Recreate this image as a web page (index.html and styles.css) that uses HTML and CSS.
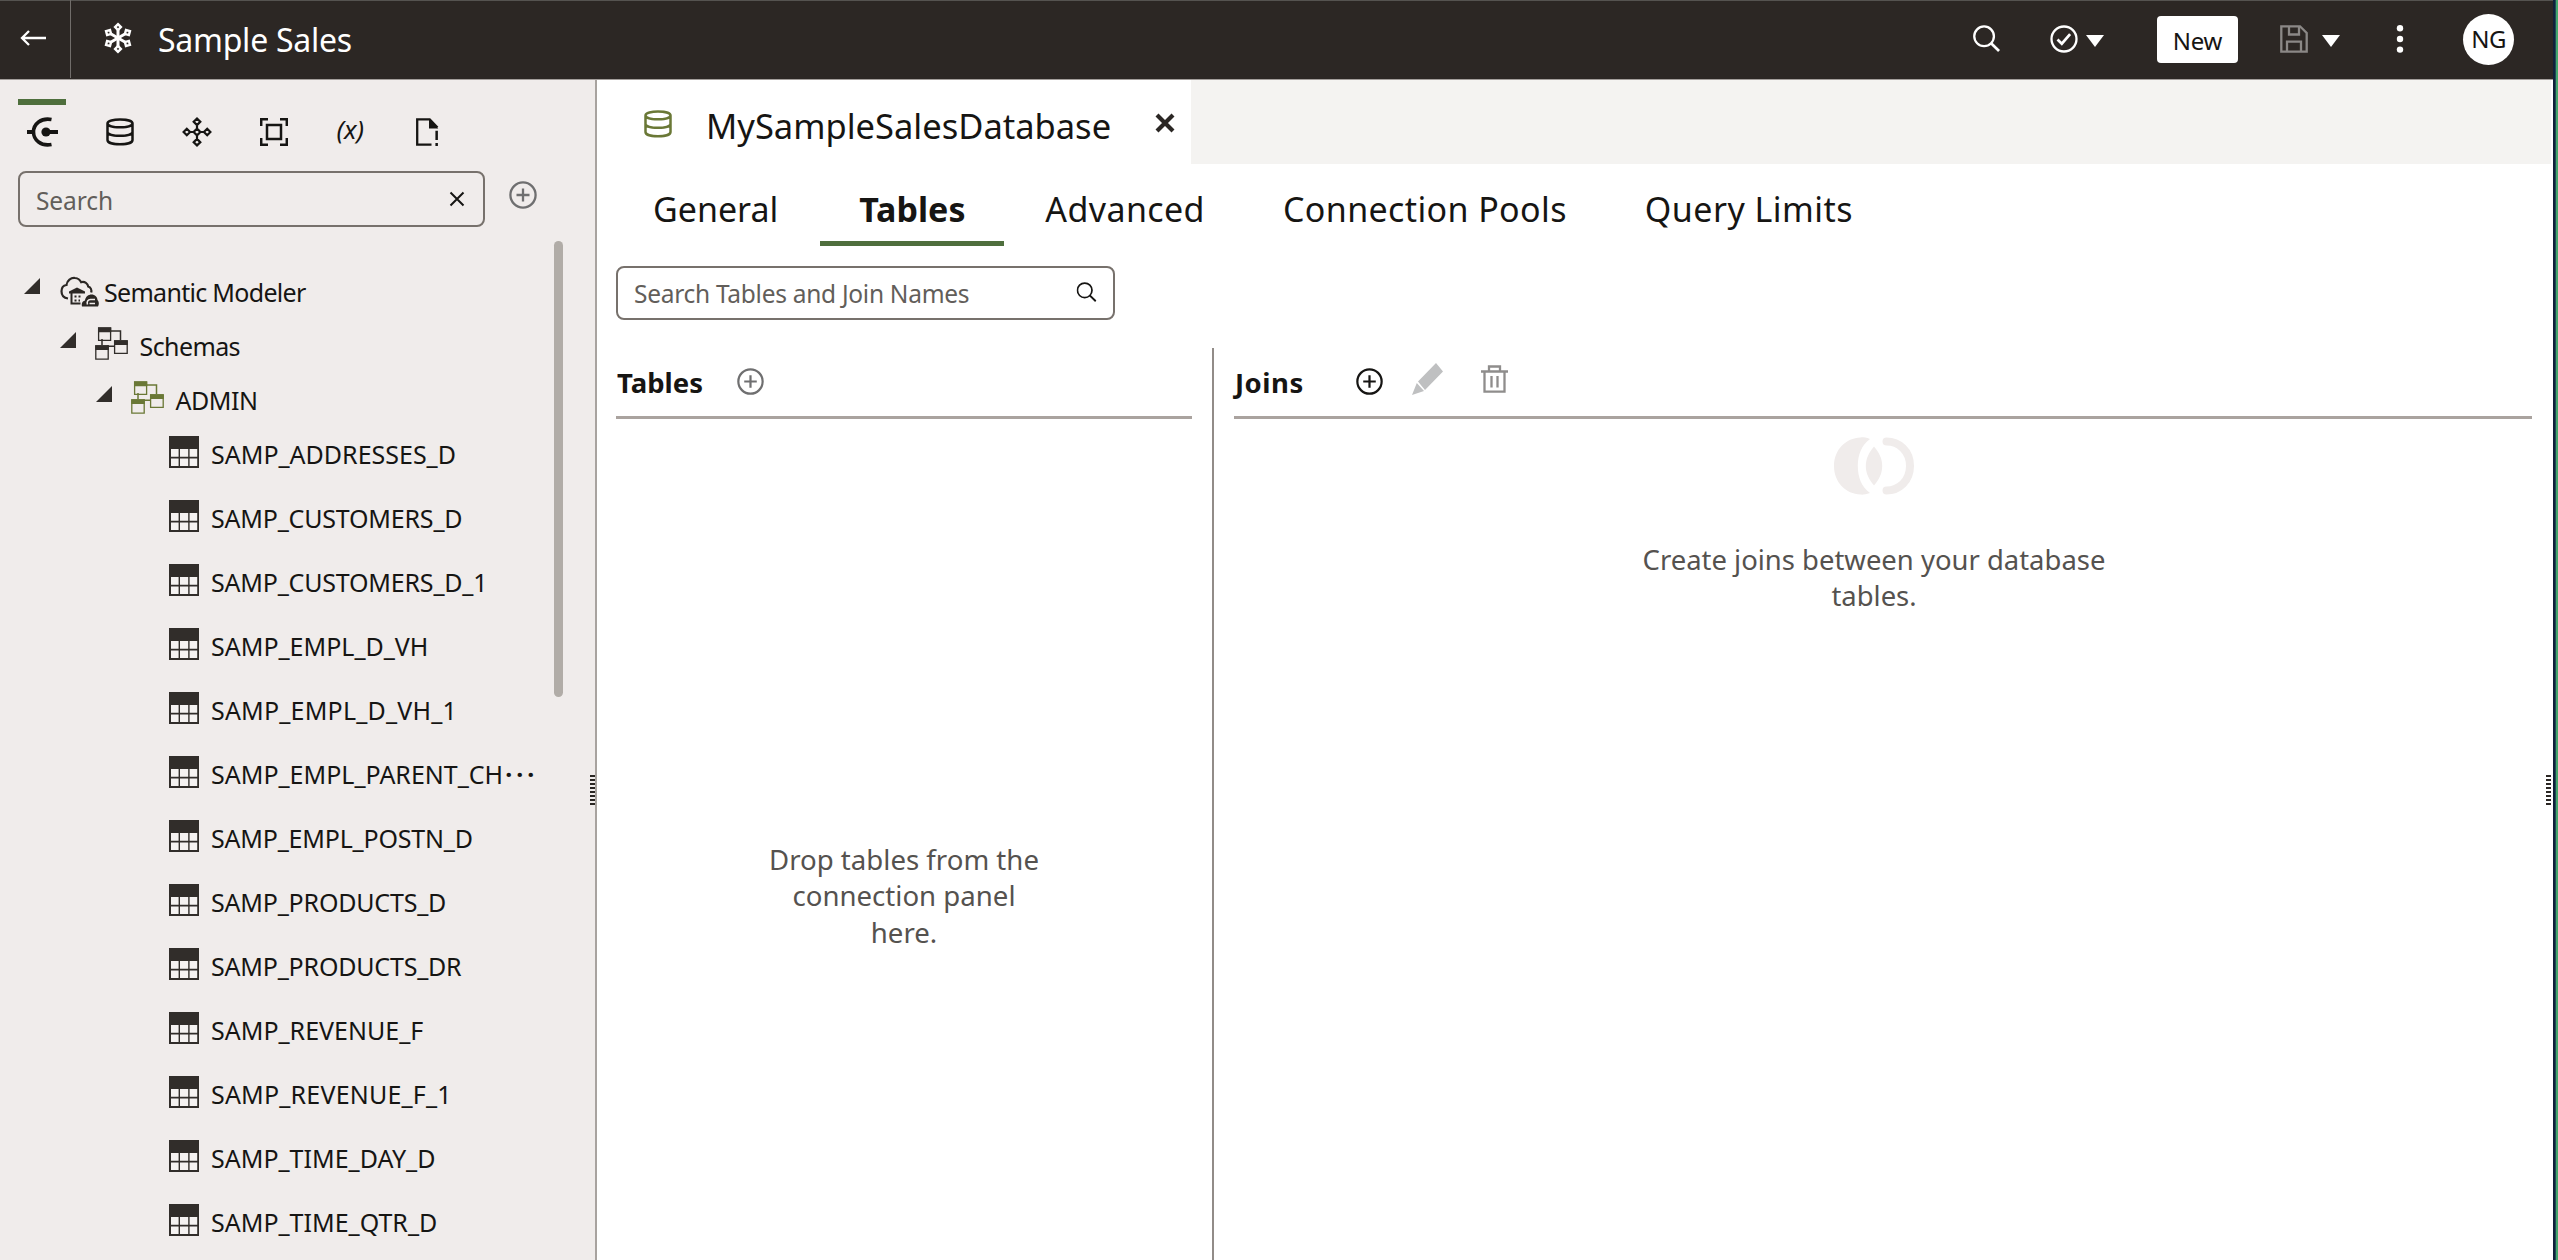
FILE: index.html
```html
<!DOCTYPE html>
<html lang="en">
<head>
<meta charset="utf-8">
<title>Sample Sales</title>
<link rel="stylesheet" href="styles.css">
</head>
<body>
<svg class="defs" aria-hidden="true">
  <defs>
    <symbol id="i-db" viewBox="0 0 28 28"><path d="M1.5 5.5C1.5 .2 26.5 .2 26.5 5.5V22C26.5 27.8 1.5 27.8 1.5 22ZM1.5 5.5C1.5 10.6 26.5 10.6 26.5 5.5M1.5 14C1.5 19.1 26.5 19.1 26.5 14" fill="none" stroke="currentColor" stroke-width="2.5"/></symbol>
    <symbol id="i-plus" viewBox="0 0 28 28"><circle cx="14" cy="14" r="12.6" fill="none" stroke="currentColor" stroke-width="2.3"/><path d="M14 7.5v13M7.5 14h13" stroke="currentColor" stroke-width="2.3"/></symbol>
    <symbol id="i-search" viewBox="0 0 28 28"><circle cx="11.5" cy="11.7" r="10.2" fill="none" stroke="currentColor" stroke-width="2.4"/><path d="M18.5 18.7L27 27" stroke="currentColor" stroke-width="2.8"/></symbol>
    <symbol id="i-down" viewBox="0 0 18 12"><path d="M0 0h18L9 12z" fill="currentColor"/></symbol>
    <symbol id="i-open" viewBox="0 0 16 16"><path d="M16 0v16H0z" fill="currentColor"/></symbol>
    <symbol id="i-table" viewBox="0 0 30 32"><path d="M0 0h30v32H0z" fill="#312d2a"/><path d="M2 13h7.6v7.8H2zM11 13h8.2v7.8H11zM20.6 13h7.6v7.8h-7.6zM2 22.4h7.6v7.6H2zM11 22.4h8.2V30H11zM20.6 22.4h7.6V30h-7.6z" fill="#f5f2f1"/></symbol>
    <symbol id="i-schema" viewBox="0 0 33 33"><path d="M15 4h10.5v9M7 12v6M12 19.3h8" fill="none" stroke="currentColor" stroke-width="1.5"/><g fill="none" stroke="currentColor" stroke-width="1.3"><path d="M3.6 1h12v12.4h-12zM19.6 14h12.6v12.4H19.6zM.8 19h12.4v13.2H.8z"/></g><path d="M3 .4h13.2v4.8H3zM19 13.2h13.8V18H19zM.2 18.2h13.6V23H.2z" fill="currentColor"/></symbol>
  </defs>
</svg>

<div class="window">
  <div class="app">
    <header class="header">
      <div class="back"><svg width="26" height="16" viewBox="0 0 26 16"><path d="M26 8H2M9 1L2 8l7 7" fill="none" stroke="#fff" stroke-width="2.3"/></svg></div>
      <svg class="flake" width="32" height="32" viewBox="-16 -16 32 32">
        <defs><g id="arm"><path d="M0 0V-8.5" stroke-width="3"/><path d="M0-13.8L2.9-10.900 0-8-2.900-10.900Z" stroke-width="2.400"/></g></defs>
        <g fill="none" stroke="#fff"><use href="#arm"/><use href="#arm" transform="rotate(60)"/><use href="#arm" transform="rotate(120)"/><use href="#arm" transform="rotate(180)"/><use href="#arm" transform="rotate(240)"/><use href="#arm" transform="rotate(300)"/></g>
      </svg>
      <h1 class="title">Sample Sales</h1>
      <div class="actions">
        <svg class="a-search" width="27" height="27"><use href="#i-search"/></svg>
        <svg class="a-check" width="28" height="28" viewBox="0 0 28 28"><circle cx="14" cy="14" r="12.5" fill="none" stroke="#fff" stroke-width="2.3"/><path d="M7.5 14.5l4.3 4.2 8.3-9.6" fill="none" stroke="#fff" stroke-width="2.7"/></svg>
        <svg class="a-tri" width="18" height="12"><use href="#i-down"/></svg>
        <button class="new">New</button>
        <svg class="a-save" width="28" height="28" viewBox="0 0 28 28"><path d="M1.3 1.3H20L26.7 8v18.7H1.3zM9 1.5v8h10v-8M7 26.5v-9.8h14v9.8" fill="none" stroke="#8b8886" stroke-width="2.3"/></svg>
        <svg class="a-tri2" width="18" height="12"><use href="#i-down"/></svg>
        <svg class="a-dots" width="8" height="30" viewBox="0 0 8 30" fill="#fff"><circle cx="4" cy="4.2" r="3.2"/><circle cx="4" cy="15" r="3.2"/><circle cx="4" cy="25.6" r="3.2"/></svg>
        <div class="avatar">NG</div>
      </div>
    </header>

    <div class="body">
      <aside class="sidebar">
        <nav class="tools">
          <div class="tool active"><svg width="32" height="30" viewBox="0 0 32 30"><path d="M24.5 2.5C14 .5 6.5 7 6.5 15S14 29.500 24.500 27.500" fill="none" stroke="#161513" stroke-width="3.6"/><path d="M0 15h7M18 15h13" stroke="#161513" stroke-width="4"/><circle cx="19" cy="15" r="4.600" fill="#161513"/></svg></div>
          <div class="tool"><svg width="28" height="28"><use href="#i-db"/></svg></div>
          <div class="tool"><svg width="30" height="30" viewBox="-15 -15 30 30" fill="none" stroke="#161513" stroke-width="2.200"><path d="M0-3.400L3.400 0 0 3.400-3.400 0ZM0-13.400L3.300-10.200 0-6.900-3.300-10.200ZM0 13.400L3.300 10.200 0 6.900-3.300 10.200ZM-13.400 0L-10.200-3.300-6.900 0-10.200 3.300ZM13.400 0L10.200-3.300 6.900 0 10.200 3.300ZM0-7V-3M0 7V3M-7 0H-3M7 0H3"/></svg></div>
          <div class="tool"><svg width="28" height="28" viewBox="0 0 28 28" fill="none" stroke="#161513" stroke-width="2.500"><path d="M1.200 8V1.200H8M20 1.200h6.800V8M26.800 20v6.800H20M8 26.800H1.200V20M7 7h14v14H7z"/></svg></div>
          <div class="tool vars">(x)</div>
          <div class="tool"><svg width="24" height="28" viewBox="0 0 24 28"><path d="M16.500 26.700H2.200V1.300h12.500L22.500 9.500" fill="none" stroke="#161513" stroke-width="2.300"/><path d="M14 1l9.300 9.500H14zM20.400 12.800h2.500v9.300h-2.500zM20.400 25h2.500v3h-2.500z" fill="#161513"/></svg></div>
        </nav>
        <div class="filter">
          <div class="field side-field"><span>Search</span><svg width="16" height="16" viewBox="0 0 16 16"><path d="M1.500 1.500l13 13M14.500 1.500l-13 13" stroke="#161513" stroke-width="2"/></svg></div>
          <svg class="add" width="28" height="28"><use href="#i-plus"/></svg>
        </div>
        <div class="scroll">
          <div class="tree">
            <div class="node l0"><svg class="caret" width="16" height="16"><use href="#i-open"/></svg>
              <svg class="kind" width="39" height="31" viewBox="0 0 39 31"><path d="M8 22.500C3.500 21.800 1.500 18.500 1.500 15.200 1.500 12 3.500 9.500 6.500 9 7 4.500 11 1.500 15 2c3 .3 5 1.800 6.200 4.200 3.600-1 6.600 1.300 7 4.300 2.600.8 3.600 3.500 3 6" fill="none" stroke="#2b2724" stroke-width="2.200"/><path d="M9 15.500l8-4 8 4v2H9z" fill="#2b2724"/><path d="M11.500 16v11.500h9" fill="none" stroke="#2b2724" stroke-width="2"/><path d="M14.500 19.500h2v2h-2zM18.500 19.500h2v2h-2zM14.500 23.500h2v2h-2zM18.500 23.500h1.500v2h-1.500z" fill="#2b2724"/><path d="M22 30.500c-1-3.500 1-5.500 3-6 .5-4 3.500-6 6.500-6 3.500 0 6 2.500 6 5.500 1.500 1.500 1.800 4.500.5 6.500z" fill="#2b2724"/><path d="M27.500 28.500c-1-3 .5-5 3-5h4.500M29.500 27.500h5.500" fill="none" stroke="#f0eceb" stroke-width="1.600"/></svg>
              <span>Semantic Modeler</span></div>
            <div class="node l1"><svg class="caret" width="16" height="16"><use href="#i-open"/></svg><svg class="kind" width="33" height="33"><use href="#i-schema"/></svg><span>Schemas</span></div>
            <div class="node l2"><svg class="caret" width="16" height="16"><use href="#i-open"/></svg><svg class="kind green" width="33" height="33"><use href="#i-schema"/></svg><span>ADMIN</span></div>
            <div class="leaf"><svg width="30" height="32"><use href="#i-table"/></svg><span>SAMP_ADDRESSES_D</span></div>
            <div class="leaf tight"><svg width="30" height="32"><use href="#i-table"/></svg><span>SAMP_CUSTOMERS_D</span></div>
            <div class="leaf tight"><svg width="30" height="32"><use href="#i-table"/></svg><span>SAMP_CUSTOMERS_D_1</span></div>
            <div class="leaf"><svg width="30" height="32"><use href="#i-table"/></svg><span>SAMP_EMPL_D_VH</span></div>
            <div class="leaf loose"><svg width="30" height="32"><use href="#i-table"/></svg><span>SAMP_EMPL_D_VH_1</span></div>
            <div class="leaf"><svg width="30" height="32"><use href="#i-table"/></svg><span>SAMP_EMPL_PARENT_CH<b class="more">···</b></span></div>
            <div class="leaf tight"><svg width="30" height="32"><use href="#i-table"/></svg><span>SAMP_EMPL_POSTN_D</span></div>
            <div class="leaf tight"><svg width="30" height="32"><use href="#i-table"/></svg><span>SAMP_PRODUCTS_D</span></div>
            <div class="leaf tight"><svg width="30" height="32"><use href="#i-table"/></svg><span>SAMP_PRODUCTS_DR</span></div>
            <div class="leaf"><svg width="30" height="32"><use href="#i-table"/></svg><span>SAMP_REVENUE_F</span></div>
            <div class="leaf loose"><svg width="30" height="32"><use href="#i-table"/></svg><span>SAMP_REVENUE_F_1</span></div>
            <div class="leaf"><svg width="30" height="32"><use href="#i-table"/></svg><span>SAMP_TIME_DAY_D</span></div>
            <div class="leaf"><svg width="30" height="32"><use href="#i-table"/></svg><span>SAMP_TIME_QTR_D</span></div>
          </div>
          <div class="thumb"></div>
        </div>
        <div class="grip"></div>
      </aside>

      <main class="main">
        <div class="docbar">
          <div class="doc"><svg width="28" height="28"><use href="#i-db"/></svg><span>MySampleSalesDatabase</span><svg class="close" width="20" height="20" viewBox="0 0 20 20"><path d="M2 2l16 16M18 2L2 18" stroke="#2b2724" stroke-width="4.200"/></svg></div>
        </div>
        <nav class="tabs">
          <a class="t1">General</a><a class="t2 on">Tables</a><a class="t3">Advanced</a><a class="t4">Connection Pools</a><a class="t5">Query Limits</a>
        </nav>
        <div class="field main-field"><span>Search Tables and Join Names</span><svg width="21" height="20" viewBox="0 0 28 28"><use href="#i-search"/></svg></div>
        <div class="panes">
          <section class="pane tables">
            <div class="pane-head"><h2>Tables</h2><svg class="grey plus" width="27" height="27"><use href="#i-plus"/></svg></div>
            <p class="drop">Drop tables from the<br>connection panel<br>here.</p>
          </section>
          <section class="pane joins">
            <div class="pane-head"><h2>Joins</h2><svg class="plus" width="27" height="27"><use href="#i-plus"/></svg>
              <svg class="pencil" width="31" height="32" viewBox="0 0 31 32"><path d="M24 0l7 8.500L13 27 6 18.500zM4.800 20l7.200 8-12 4z" fill="#bfc0c1"/></svg>
              <svg class="trash" width="27" height="28" viewBox="0 0 27 28" fill="none" stroke="#8f8d8c" stroke-width="2.300"><path d="M0 6.500h27M3.500 7v19.600h20V7M8 6V1.500h11V6M10.500 11v11.500M16.500 11v11.500"/></svg></div>
            <div class="empty">
              <svg width="80" height="58" viewBox="0 0 80 58"><path d="M36 2C31 .3 28 .2 26.500 .5 12 1 0 12.500 0 29S12 57 26.500 57.500c1.500.3 4.500.2 9.500-1.500C27.500 50 23.800 40 23.800 29S27.500 8 36 2Z" fill="#f0eceb"/><path d="M40 9.500c5 6 8.200 12 8.200 19.500S45 42.500 40 48.500C35 42.500 31.800 36.500 31.800 29S35 15.500 40 9.500Z" fill="#f0eceb"/><path d="M52.500 4.500C65 4.500 76 14 76 29S65 53.500 52.500 53.500" fill="none" stroke="#f0eceb" stroke-width="8" stroke-linecap="round"/></svg>
              <p>Create joins between your database<br>tables.</p>
            </div>
          </section>
        </div>
        <div class="grip"></div>
      </main>
    </div>
  </div>
  <div class="edge"></div>
</div>
</body>
</html>
```
FILE: styles.css
```css
* { box-sizing: border-box; }
body {
  margin: 0;
  font-family: "Noto Sans", "Open Sans", sans-serif;
  color: #161513;
  background: #fff;
  overflow: hidden;
}
.defs { position: absolute; width: 0; height: 0; }
svg { display: block; flex: none; }
h1, h2, p { margin: 0; }
span, h1, h2, a { white-space: nowrap; }

.window { display: flex; width: 2558px; height: 1260px; }
.app { flex: 1; display: flex; flex-direction: column; min-width: 0; }
.edge { width: 5px; background: linear-gradient(90deg, #10203a 0 2px, #1f4a58 2px 3px, #45a66c 3px); }

/* header */
.header {
  display: flex;
  align-items: center;
  height: 80px;
  flex: none;
  padding-bottom: 2px;
  background: #2c2724;
  color: #fff;
  border-top: 1px solid #555350;
  border-bottom: 1px solid #a39e9b;
}
.back { display: flex; align-items: center; width: 71px; height: 78px; padding: 0 0 2px 20px; border-right: 1px solid #716d6a; }
.flake { margin: 0 0 2px 31px; }
.title { margin: 2px 0 0 24px; font-size: 32px; line-height: 40px; font-weight: 400; letter-spacing: -.25px; }
.actions { display: flex; align-items: center; margin-left: auto; }
.a-search { margin-bottom: 1px; }
.a-check { margin-left: 50px; }
.a-tri { margin: 4px 0 0 8px; }
.new {
  width: 81px; height: 47px; margin: 0 0 0 53px; padding: 3px 0 0;
  border: 0; border-radius: 4px; background: #fff; color: #161513;
  font: 400 24px/40px "Noto Sans", sans-serif; letter-spacing: -.3px;
}
.a-save { margin-left: 42px; }
.a-tri2 { margin: 4px 0 0 14px; }
.a-dots { margin-left: 56px; }
.avatar {
  width: 51px; height: 51px; margin: 1px 39px 0 59px; border-radius: 50%;
  background: #fff; color: #161513; font-size: 24px; line-height: 50px; text-align: center; letter-spacing: -.5px;
}

.body { flex: 1; display: flex; min-height: 0; }

/* sidebar */
.sidebar {
  position: relative;
  display: flex; flex-direction: column;
  width: 597px; flex: none;
  background: #f0eceb;
  border-right: 2px solid #a8a39f;
}
.tools { display: flex; padding: 19px 0 0 18px; gap: 28.700px; }
.tool { display: flex; align-items: center; justify-content: center; width: 48px; height: 55px; border-top: 6px solid transparent; padding: 5px 0 0 3px; }
.tool.active { border-color: #4f6f3d; padding-left: 2px; }
.vars { font-size: 26px; font-style: italic; padding: 1px 0 2px 3px; }
.filter { display: flex; padding: 17px 0 0 18px; }
.field {
  display: flex; align-items: center; justify-content: space-between;
  border: 2px solid #77716c; border-radius: 8px;
  color: #625e5a; font-size: 24.500px; line-height: 34px;
}
.side-field { width: 467px; height: 56px; padding: 3px 18px 0 16px; letter-spacing: -.1px; }
.side-field svg { margin-bottom: 4px; }
.add { margin: 10px 0 0 23.500px; color: #6f6f70; }
.scroll { display: flex; height: 1020px; margin-top: 14px; }
.tree { width: 554px; padding-top: 23.500px; font-size: 25px; line-height: 34px; }
.thumb { width: 9px; height: 456px; border-radius: 5px; background: #b1aca7; }
.node { display: flex; align-items: center; height: 54px; }
.l0 { padding-left: 24px; letter-spacing: -.7px; }
.l1 { padding-left: 60px; letter-spacing: -.6px; }
.l2 { padding-left: 96px; margin-bottom: -4px; letter-spacing: -.5px; }
.caret { margin-bottom: 12px; color: #312d2a; }
.kind { margin: 0 11.500px 0 19px; color: #312d2a; }
.l1 .kind, .l2 .kind { margin-bottom: 4px; }
.l0 .kind { width: 39px; margin: 0 5px 0 20px; }
.kind.green { color: #6a7836; }
.leaf { display: flex; align-items: center; height: 63.950px; padding-left: 168.500px; gap: 12.500px; }
.leaf svg { margin-bottom: 4px; }
.tight { letter-spacing: -.2px; }
.loose { letter-spacing: .2px; }
.more { display: inline-block; width: 32px; margin-left: 2px; letter-spacing: 4px; }
.grip {
  position: absolute; right: 0; top: 695px; width: 5px; height: 32px;
  background: repeating-linear-gradient(#2b2724 0 2px, transparent 2px 4px);
}
.main > .grip { right: 2px; }

/* main */
.main { position: relative; flex: 1; display: flex; flex-direction: column; min-width: 0; }
.docbar { height: 84px; flex: none; margin-right: 2px; background: #f4f3f1; }
.doc { display: flex; align-items: center; width: 594px; height: 84px; padding: 7px 0 0 47px; background: #fff; font-size: 34.500px; line-height: 46px; }
.doc > svg:first-child { color: #6a7836; margin: 0 34px 4px 0; }
.doc .close { margin: 0 0 5px 43.500px; }
.tabs { display: flex; height: 82px; flex: none; font-size: 34px; line-height: 46px; }
.tabs a { height: 82px; padding-top: 22px; }
.t1 { margin-left: 56px; }
.t2.on { width: 184px; margin-left: 42px; text-align: center; font-weight: 700; border-bottom: 5px solid #4f6f3d; }
.t3 { margin-left: 41px; letter-spacing: .4px; }
.t4 { margin-left: 78px; letter-spacing: .38px; }
.t5 { margin-left: 78px; letter-spacing: .45px; }
.main-field { width: 499px; height: 54px; flex: none; margin: 20px 0 0 19px; padding: 2px 16px 0 16px; background: #fff; letter-spacing: -.28px; }
.main-field svg { color: #161513; margin-bottom: 4px; }
.panes { flex: 1; display: flex; margin-top: 28px; min-height: 0; }
.pane { display: flex; flex-direction: column; }
.tables { width: 617px; padding: 0 20px 0 19px; border-right: 2px solid #928c88; }
.joins { flex: 1; padding: 0 21px 0 20px; }
.pane-head { display: flex; align-items: center; height: 71px; flex: none; padding: 2px 0 0 1px; border-bottom: 3px solid #aaa39f; }
h2 { font-size: 27.500px; line-height: 38px; font-weight: 700; }
.plus { margin: 0 0 3px 34px; }
.grey { color: #6f6f70; }
.joins h2 { letter-spacing: .5px; }
.joins .plus { margin-left: 52px; }
.pencil { margin: 0 0 9px 29px; }
.trash { margin: 0 0 9px 38px; }
.drop { margin-top: 422px; text-align: center; color: #55524f; font-size: 27.600px; line-height: 36.400px; }
.empty { display: flex; flex-direction: column; align-items: center; margin: 18px 18px 0 0; color: #55524f; font-size: 27.450px; line-height: 36.400px; text-align: center; }
.empty p { margin-top: 47px; }
```
